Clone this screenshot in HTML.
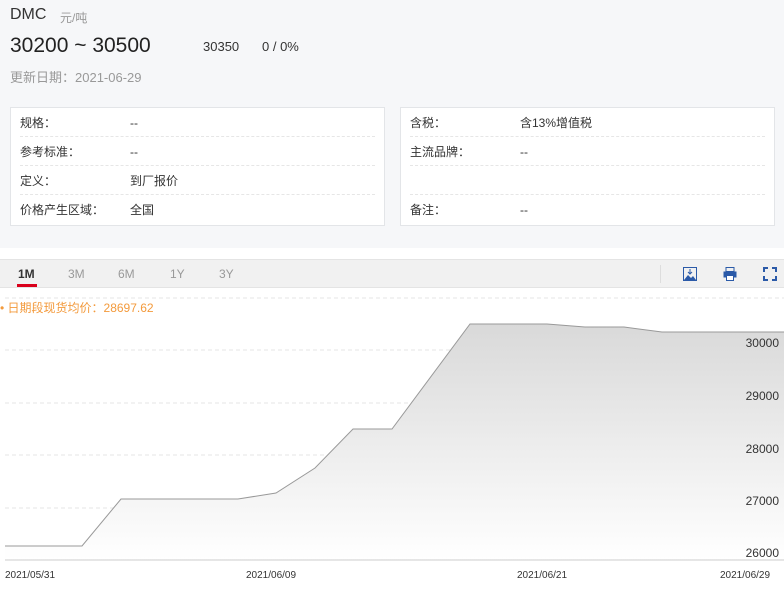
<!DOCTYPE html>
<html><head><meta charset="utf-8"><style>
*{margin:0;padding:0;box-sizing:border-box}
body{width:784px;height:590px;overflow:hidden;background:#fff;font-family:"Liberation Sans","Noto Sans CJK SC",sans-serif;position:relative}
.top{position:absolute;left:0;top:0;width:784px;height:248px;background:#f6f7f9}
.a{position:absolute;white-space:nowrap}
.box{position:absolute;top:107px;height:119px;background:#fff;border:1px solid #e3e5e8}
.row{position:absolute;left:9px;right:9px;height:29px;border-bottom:1px dashed #e6e6e6;font-size:12px;color:#333;line-height:31px}
.row span{position:absolute}
.tabs{position:absolute;left:0;top:259px;width:784px;height:29px;background:#f1f1f1;border-top:1px solid #e4e4e4;border-bottom:1px solid #e4e4e4}
.t{position:absolute;top:7px;font-size:12px;color:#999}
.yl{position:absolute;right:5px;font-size:12px;color:#333}
.xl{position:absolute;top:570px;font-size:10px;color:#333}
</style></head><body>
<div class="top"></div>
<div class="a" style="left:10px;top:6px;font-size:16px;color:#333">DMC</div>
<div class="a" style="left:60px;top:9px;font-size:12px;color:#999">元/吨</div>
<div class="a" style="left:10px;top:34px;font-size:21px;color:#222">30200 ~ 30500</div>
<div class="a" style="left:203px;top:39px;font-size:13px;color:#333">30350</div>
<div class="a" style="left:262px;top:39px;font-size:13px;color:#333">0 / 0%</div>
<div class="a" style="left:10px;top:67px;font-size:13px;color:#999">更新日期：2021-06-29</div>
<div class="box" style="left:10px;width:375px">
<div class="row" style="top:0"><span style="left:0">规格：</span><span style="left:110px">--</span></div>
<div class="row" style="top:29px"><span style="left:0">参考标准：</span><span style="left:110px">--</span></div>
<div class="row" style="top:58px"><span style="left:0">定义：</span><span style="left:110px">到厂报价</span></div>
<div class="row" style="top:87px;border:none"><span style="left:0">价格产生区域：</span><span style="left:110px">全国</span></div>
</div>
<div class="box" style="left:400px;width:375px">
<div class="row" style="top:0"><span style="left:0">含税：</span><span style="left:110px">含13%增值税</span></div>
<div class="row" style="top:29px"><span style="left:0">主流品牌：</span><span style="left:110px">--</span></div>
<div class="row" style="top:58px"></div>
<div class="row" style="top:87px;border:none"><span style="left:0">备注：</span><span style="left:110px">--</span></div>
</div>
<div class="tabs">
<div class="t" style="left:18px;color:#333;font-weight:bold">1M</div>
<div style="position:absolute;left:17px;top:24px;width:20px;height:3px;background:#d9001b"></div>
<div class="t" style="left:68px">3M</div><div class="t" style="left:118px">6M</div>
<div class="t" style="left:170px">1Y</div><div class="t" style="left:219px">3Y</div>
<div style="position:absolute;left:660px;top:5px;width:1px;height:18px;background:#ddd"></div>
<svg style="position:absolute;left:683px;top:7px" width="14" height="14"><rect x="0.5" y="0.5" width="13" height="13" fill="none" stroke="#2b5aa8"/><path d="M1 13 L5 8 L8 11 L10 9 L13 13Z" fill="#2b5aa8"/><path d="M7 2v5M5 5l2 2 2-2" stroke="#2b5aa8" fill="none"/></svg>
<svg style="position:absolute;left:723px;top:7px" width="14" height="14"><rect x="3" y="0.5" width="8" height="4" fill="none" stroke="#2b5aa8"/><rect x="0.5" y="4.5" width="13" height="6" fill="#2b5aa8"/><rect x="3.5" y="8.5" width="7" height="5" fill="#fff" stroke="#2b5aa8"/></svg>
<svg style="position:absolute;left:763px;top:7px" width="14" height="14" fill="none" stroke="#2b5aa8" stroke-width="2"><path d="M1 5V1h4M9 1h4v4M13 9v4H9M5 13H1V9"/></svg>
</div>
<div class="a" style="left:0;top:299px;font-size:12px;color:#f39a3c">• 日期段现货均价：28697.62</div>
<svg style="position:absolute;left:0;top:0" width="784" height="590">
<defs><linearGradient id="g" x1="0" y1="0" x2="0" y2="1"><stop offset="0" stop-color="#d9d9d9"/><stop offset="1" stop-color="#fff"/></linearGradient></defs>
<g stroke="#e6e6e6" stroke-dasharray="4,3"><line x1="5" y1="298" x2="784" y2="298"/><line x1="5" y1="350" x2="784" y2="350"/><line x1="5" y1="403" x2="784" y2="403"/><line x1="5" y1="455" x2="784" y2="455"/><line x1="5" y1="508" x2="784" y2="508"/></g>
<path d="M5 546L82 546L121 499L238 499L276 493L315 468L353 429L392 429L470 324L547 324L585 327L624 327L662 332L784 332L784 560L5 560Z" fill="url(#g)"/>
<path d="M5 546L82 546L121 499L238 499L276 493L315 468L353 429L392 429L470 324L547 324L585 327L624 327L662 332L784 332" fill="none" stroke="#999"/>
<line x1="5" y1="560" x2="784" y2="560" stroke="#ccc"/>
</svg>
<div class="yl" style="top:336px">30000</div><div class="yl" style="top:389px">29000</div>
<div class="yl" style="top:442px">28000</div><div class="yl" style="top:494px">27000</div><div class="yl" style="top:546px">26000</div>
<div class="xl" style="left:5px">2021/05/31</div><div class="xl" style="left:246px">2021/06/09</div>
<div class="xl" style="left:517px">2021/06/21</div><div class="xl" style="left:720px">2021/06/29</div>
</body></html>
